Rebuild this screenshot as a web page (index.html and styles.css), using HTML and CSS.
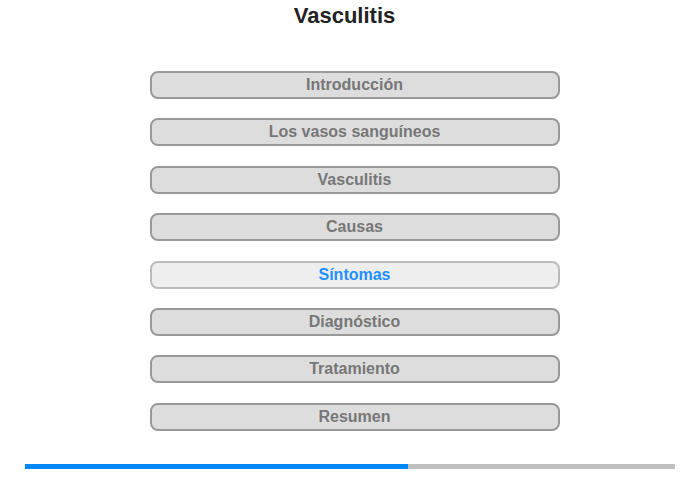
FILE: index.html
```html
<!DOCTYPE html>
<html lang="es">
<head>
    <meta charset="UTF-8">
    <meta name="viewport" content="width=device-width, initial-scale=1.0">
    <title>Vasculitis</title>
    <link rel="stylesheet" href="styles.css">
</head>
<body>
    <div class="container">
        <h1>Vasculitis</h1>

        <div class="menu">
            <button class="btn">Introducción</button>
            <button class="btn">Los vasos sanguíneos</button>
            <button class="btn">Vasculitis</button>
            <button class="btn">Causas</button>
            <button class="btn active">Síntomas</button>
            <button class="btn">Diagnóstico</button>
            <button class="btn">Tratamiento</button>
            <button class="btn">Resumen</button>
        </div>

        <div class="progress">
            <div class="progress-fill" style="width: 58.9%"></div>
        </div>
    </div>
</body>
</html>
```

FILE: styles.css
```css
body {
    font-family: "Liberation Sans", Arial, sans-serif;
    background-color: #fff;
    margin: 0;
    padding: 0;
}
.container {
    width: 700px;
    height: 480px;
    padding-top: 3px;
    box-sizing: border-box;
}
h1 {
    text-align: center;
    color: #222;
    font-size: 22px;
    font-weight: bold;
    margin: 0;
    padding-right: 11px;
    line-height: 25px;
}
.menu {
    display: flex;
    flex-direction: column;
    align-items: center;
    gap: 19.4px;
    margin-top: 43px;
    padding-left: 9px;
}
.btn {
    width: 410px;
    height: 28px;
    padding: 0;
    background-color: #ddd;
    color: #777;
    font-family: inherit;
    font-size: 16px;
    font-weight: bold;
    border: 2px solid #999;
    border-radius: 8px;
    cursor: pointer;
}
.btn.active {
    background-color: #eee;
    border-color: #bbb;
    color: #1e90ff;
}
.progress {
    margin: 33px 25px 0;
    height: 5px;
    background-color: #c0c0c0;
}
.progress-fill {
    height: 100%;
    background-color: #0088ff;
}
```
